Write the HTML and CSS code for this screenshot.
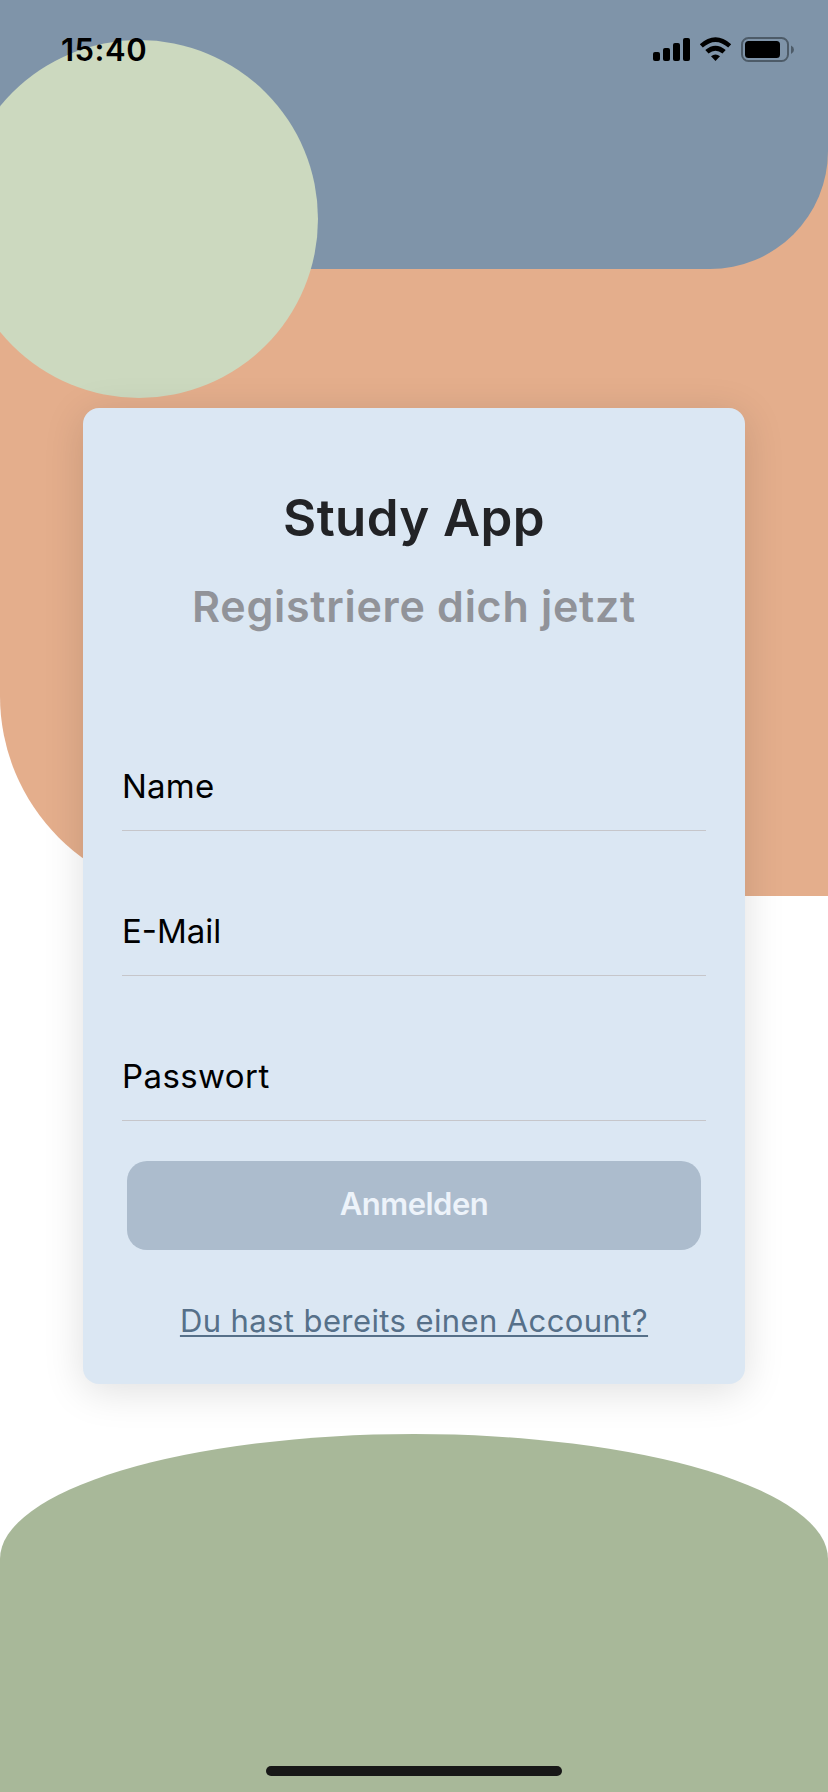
FILE: index.html
```html
<!DOCTYPE html>
<html lang="de">
<head>
<meta charset="utf-8">
<title>Study App</title>
<link rel="stylesheet" href="styles.css">
</head>
<body>
<div class="screen">
  <div class="shape shape-orange"></div>
  <div class="shape shape-blue"></div>
  <div class="shape shape-circle"></div>
  <div class="shape shape-hill"></div>
  <header class="status">
    <span class="time">15:40</span>
    <svg class="indicators" width="146" height="30" viewBox="650 35 146 30">
      <rect x="653" y="52" width="7" height="9" rx="2"/>
      <rect x="663" y="48" width="7" height="13" rx="2"/>
      <rect x="673" y="43" width="7" height="18" rx="2"/>
      <rect x="683" y="38" width="7" height="23" rx="2"/>
      <path d="M699.800 44.200Q715.500 30.300 731.200 44.200L728.200 47.600Q715.500 36.300 702.800 47.600Z"/>
      <path d="M705.300 50Q715.500 41.500 725.700 50L722.500 53.500Q715.500 48 708.500 53.500Z"/>
      <path d="M711 56.200Q715.500 52.600 720 56.200L715.500 61Z"/>
      <rect class="battery-frame" x="742" y="38" width="46" height="23" rx="6.500"/>
      <rect x="745" y="41" width="35" height="17" rx="3.500"/>
      <path class="battery-tip" d="M791 45.500Q794 47 794 49.700T791 54Z"/>
    </svg>
  </header>
  <main class="card">
    <h1 class="title">Study App</h1>
    <h2 class="subtitle">Registriere dich jetzt</h2>
    <div class="field">Name</div>
    <div class="field field-mail">E-Mail</div>
    <div class="field field-password">Passwort</div>
    <button class="submit">Anmelden</button>
    <a class="login">Du hast bereits einen Account?</a>
  </main>
  <div class="home-indicator"></div>
</div>
</body>
</html>
```
FILE: styles.css
```css
* { box-sizing: border-box; }
body { margin: 0; font-family: Inter, Roboto, sans-serif; }
.screen {
  position: relative;
  width: 828px;
  height: 1792px;
  overflow: hidden;
  background: #fff;
  display: flex;
  flex-direction: column;
  align-items: center;
}
.shape { position: absolute; }
.shape-orange { left: 0; top: 0; width: 828px; height: 896px; background: #e4ae8c; border-bottom-left-radius: 200px; }
.shape-blue { left: 0; top: 0; width: 828px; height: 269px; background: #7f94a9; border-bottom-right-radius: 118px; }
.shape-circle { left: -40px; top: 40px; width: 358px; height: 358px; background: #ccd9bf; border-radius: 50%; }
.shape-hill { left: 0; top: 1434px; width: 828px; height: 358px; background: #a8b899; border-radius: 414px 414px 0 0 / 125px 125px 0 0; }
.status {
  position: relative;
  width: 828px;
  height: 408px;
  padding: 30px 32px 0 61px;
  display: flex;
  justify-content: space-between;
  align-items: flex-start;
}
.time { font-size: 31px; font-weight: 600; line-height: 40px; letter-spacing: 0.5px; }
.indicators { margin-top: 5px; }
.battery-frame { fill: none; stroke: #4d5b68; stroke-width: 2; }
.battery-tip { fill: #4d5b68; }
.card {
  position: relative;
  width: 662px;
  height: 976px;
  padding: 80px 39px 0;
  display: flex;
  flex-direction: column;
  background: #dbe7f3;
  border-radius: 16px;
  box-shadow: 0 7px 40px rgba(0, 0, 0, 0.13);
}
.title { margin: 0; font-size: 51px; line-height: 60px; font-weight: 600; letter-spacing: 0.4px; text-align: center; color: #222326; }
.subtitle { margin: 32px 0 54px; font-size: 43px; line-height: 52px; font-weight: 600; letter-spacing: 0.72px; text-align: center; color: #919399; }
.field {
  height: 145px;
  padding-bottom: 24px;
  display: flex;
  align-items: flex-end;
  border-bottom: 1px solid #c6c6ca;
  font-size: 33px;
  line-height: 40px;
  letter-spacing: 0.2px;
  color: #000;
}
.field-mail { letter-spacing: 0; }
.field-password { letter-spacing: 0.4px; }
.submit {
  height: 89px;
  margin: 40px 5px 51px;
  padding: 0 0 3px;
  border: 0;
  border-radius: 20px;
  background: #acbccd;
  color: #edf3fa;
  font: 600 31px/40px Inter, Roboto, sans-serif;
  letter-spacing: -0.5px;
}
.login {
  align-self: center;
  font-size: 31px;
  line-height: 40px;
  letter-spacing: 0.4px;
  text-align: center;
  color: #567089;
  text-decoration: underline;
  text-decoration-thickness: 2px;
  text-underline-offset: 3px;
  text-decoration-skip-ink: none;
}
.home-indicator {
  position: absolute;
  left: 266px;
  bottom: 16px;
  width: 296px;
  height: 10px;
  border-radius: 5px;
  background: #171717;
}
```
